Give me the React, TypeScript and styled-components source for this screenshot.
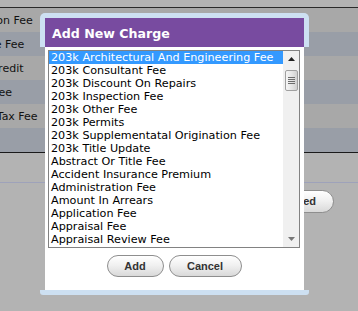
import styled, { createGlobalStyle } from "styled-components";

const GlobalStyle = createGlobalStyle`
  html, body {
    margin: 0;
    padding: 0;
    background: #b3b3b3;
    overflow: hidden;
  }
`;

const feeRows = [
  "Origination Fee",
  "Mortgage Fee",
  "Lender Credit",
  "Courier Fee",
  "Transfer Tax Fee",
  "",
];

// only the rows that fit in the list box are shown
const charges = [
  "203k Architectural And Engineering Fee",
  "203k Consultant Fee",
  "203k Discount On Repairs",
  "203k Inspection Fee",
  "203k Other Fee",
  "203k Permits",
  "203k Supplementatal Origination Fee",
  "203k Title Update",
  "Abstract Or Title Fee",
  "Accident Insurance Premium",
  "Administration Fee",
  "Amount In Arrears",
  "Application Fee",
  "Appraisal Fee",
  "Appraisal Review Fee",
];

const App = () => {
  return (
    <>
      <GlobalStyle />
      <Screen>
        <Page>
          <FeeTable>
            {feeRows.map((label, i) => (
              <FeeRow key={i} $alt={i % 2 === 1}>
                <FeeLabel>{label}</FeeLabel>
              </FeeRow>
            ))}
          </FeeTable>
          <Divider />
          <Actions>
            <PillButton type="button">Add Selected</PillButton>
          </Actions>
        </Page>

        <Dialog>
          <TitleFrame>
            <TitleBar>Add New Charge</TitleBar>
          </TitleFrame>
          <DialogBody>
            <ListBox>
              <Options>
                {charges.map((c, i) => (
                  <Option key={c} $selected={i === 0}>
                    {c}
                  </Option>
                ))}
              </Options>
              <ScrollBar>
                <ArrowButton>
                  <svg width="7" height="4" viewBox="0 0 7 4">
                    <polygon points="0,4 3.5,0 7,4" fill="#222" />
                  </svg>
                </ArrowButton>
                <Thumb>
                  <Grip />
                  <Grip />
                  <Grip />
                  <Grip />
                </Thumb>
                <Track />
                <ArrowButton>
                  <svg width="7" height="4" viewBox="0 0 7 4">
                    <polygon points="0,0 7,0 3.5,4" fill="#777" />
                  </svg>
                </ArrowButton>
              </ScrollBar>
            </ListBox>
            <ButtonRow>
              <PillButton type="button" $width={57}>
                Add
              </PillButton>
              <PillButton type="button" $width={73}>
                Cancel
              </PillButton>
            </ButtonRow>
          </DialogBody>
          <BottomFrame />
        </Dialog>
      </Screen>
    </>
  );
};

const Screen = styled.div`
  position: relative;
  width: 358px;
  height: 311px;
  overflow: hidden;
  background: #b3b3b3;
`;

const Page = styled.div`
  display: flex;
  flex-direction: column;
  padding-top: 7px;
`;

const FeeTable = styled.div`
  display: flex;
  flex-direction: column;
  border-top: 1px solid #2a2a2a;
  border-bottom: 1px solid #1a1a1a;
`;

const FeeRow = styled.div<{ $alt?: boolean }>`
  height: 24px;
  display: flex;
  align-items: center;
  background: ${(p) => (p.$alt ? "#999ea7" : "#a8a8a8")};
`;

const FeeLabel = styled.span`
  margin-left: -51px;
  font-family: "DejaVu Sans", Verdana, sans-serif;
  font-size: 11px;
  color: #111;
  white-space: nowrap;
`;

const Divider = styled.div`
  margin-top: 29px;
  height: 1px;
  background: #9ea2ba;
`;

const Actions = styled.div`
  display: flex;
  justify-content: flex-end;
  padding: 7px 24px 0 0;
`;

const PillButton = styled.button<{ $width?: number }>`
  height: ${(p) => (p.$width ? "22px" : "23px")};
  ${(p) => (p.$width ? `width: ${p.$width}px;` : "padding: 0 17px;")}
  border: 1px solid #8e8e8e;
  border-radius: 12px;
  background: linear-gradient(#ffffff 0%, #f1f1f1 45%, #d9d9d9 100%);
  font-family: "Liberation Sans", Arial, sans-serif;
  font-size: 11px;
  line-height: 13px;
  font-weight: 700;
  color: #333;
  padding-top: 0;
  padding-bottom: 0;
  display: flex;
  align-items: center;
  justify-content: center;
  cursor: pointer;
`;

const Dialog = styled.div`
  position: absolute;
  left: 40px;
  top: 13px;
  width: 269px;
  display: flex;
  flex-direction: column;
`;

const TitleFrame = styled.div`
  background: #cde0f2;
  border-radius: 5px 5px 0 0;
  padding: 5px 5px 0;
`;

const TitleBar = styled.div`
  height: 29px;
  background: #784ba0;
  color: #fff;
  font-family: "DejaVu Sans", Verdana, sans-serif;
  font-weight: 700;
  font-size: 12.6px;
  display: flex;
  align-items: center;
  padding-left: 7px;
  padding-top: 1px;
  box-sizing: border-box;
`;

const DialogBody = styled.div`
  margin: 0 5px;
  background: #fff;
  padding: 3px 4px 13px 3px;
  display: flex;
  flex-direction: column;
  gap: 7px;
`;

const ListBox = styled.div`
  height: 198px;
  box-sizing: border-box;
  border: 1px solid #828282;
  display: flex;
  background: #fff;
`;

const Options = styled.div`
  flex: 1;
  overflow: hidden;
  display: flex;
  flex-direction: column;
`;

const Option = styled.div<{ $selected?: boolean }>`
  flex: none;
  height: 13px;
  line-height: 13px;
  padding-left: 2px;
  font-family: "DejaVu Sans", Verdana, sans-serif;
  font-size: 11.2px;
  white-space: nowrap;
  color: ${(p) => (p.$selected ? "#fff" : "#000")};
  background: ${(p) => (p.$selected ? "#3399ff" : "transparent")};
`;

const ScrollBar = styled.div`
  width: 16px;
  flex: none;
  background: #f0f0f0;
  display: flex;
  flex-direction: column;
  align-items: center;
`;

const ArrowButton = styled.div`
  height: 16px;
  width: 16px;
  display: flex;
  align-items: center;
  justify-content: center;
  flex: none;
`;

const Thumb = styled.div`
  margin-top: 3px;
  width: 13px;
  height: 21px;
  box-sizing: border-box;
  border: 1px solid #a0a0a0;
  border-radius: 2px;
  background: linear-gradient(90deg, #f6f6f6, #e2e2e2 60%, #d0d0d0);
  display: flex;
  flex-direction: column;
  align-items: center;
  justify-content: center;
  gap: 1px;
`;

const Grip = styled.div`
  width: 7px;
  height: 1px;
  background: #6c6c6c;
`;

const Track = styled.div`
  flex: 1;
`;

const ButtonRow = styled.div`
  display: flex;
  justify-content: center;
  gap: 5px;
`;

const BottomFrame = styled.div`
  height: 5px;
  background: #cde0f2;
  border-radius: 0 0 3px 3px;
`;

export default App;
